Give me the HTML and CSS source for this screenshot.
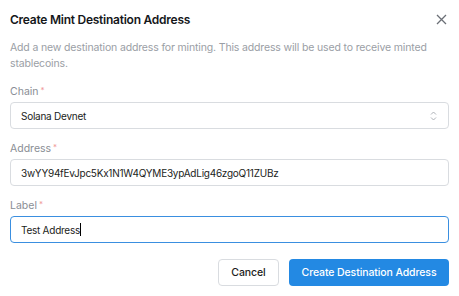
FILE: index.html
```html
<!doctype html>
<html lang="en">
<head>
<meta charset="utf-8">
<meta name="viewport" content="width=device-width, initial-scale=1">
<title>Create Mint Destination Address</title>
<link rel="stylesheet" href="styles.css">
</head>
<body>
	<div class="md-dialogo">
		<div class="md-topo">
			<h2 class="md-titulo">Create Mint Destination Address</h2>
			<button class="md-fechar" aria-label="Close">
				<svg width="11" height="11" viewBox="0 0 11 11"><path d="M1 1L10 10M10 1L1 10" stroke="#6b6f76" stroke-width="1.3" fill="none"/></svg>
			</button>
		</div>
		<p class="md-descricao">Add a new destination address for minting. This address will be used to receive minted stablecoins.</p>
		<form class="md-form">
			<div class="md-campo-grupo">
				<label class="md-rotulo">Chain<span class="md-obrigatorio">*</span></label>
				<div class="md-select">
					<span>Solana Devnet</span>
					<svg width="7" height="10" viewBox="0 0 7 10"><path d="M1 3.5L3.5 1L6 3.5M1 6.5L3.5 9L6 6.5" stroke="#a4a8ae" stroke-width="0.9" fill="none"/></svg>
				</div>
			</div>
			<div class="md-campo-grupo">
				<label class="md-rotulo">Address<span class="md-obrigatorio">*</span></label>
				<div class="md-campo">3wYY94fEvJpc5Kx1N1W4QYME3ypAdLig46zgoQ11ZUBz</div>
			</div>
			<div class="md-campo-grupo">
				<label class="md-rotulo">Label<span class="md-obrigatorio">*</span></label>
				<div class="md-campo md-foco">Test Address<span class="md-cursor"></span></div>
			</div>
			<div class="md-botoes">
				<button type="button" class="md-botao-cancelar">Cancel</button>
				<button type="button" class="md-botao-azul">Create Destination Address</button>
			</div>
		</form>
	</div>
</body>
</html>
```

FILE: styles.css
```css
*
{
	margin: 0;
	padding: 0;
	box-sizing: border-box;
}
body
{
	font-family: Inter, "Liberation Sans", Arial, sans-serif;
	font-size: 10.5px;
	background-color: #FFF;
	color: #1b1d21;
}
.md-dialogo
{
	padding: 11px 10px 10px 10px;
}
.md-topo
{
	display: flex;
	align-items: center;
	justify-content: space-between;
	height: 16px;
}
.md-titulo
{
	font-size: 12px;
	font-weight: 600;
	letter-spacing: -0.25px;
	color: #15171a;
}
.md-fechar
{
	border: none;
	background: none;
	display: flex;
	margin-right: 2px;
}
.md-descricao
{
	margin-top: 13px;
	color: #9a9ea5;
	line-height: 16px;
	letter-spacing: -0.15px;
	width: 420px;
}
.md-form
{
	margin-top: 12px;
}
.md-campo-grupo
{
	margin-bottom: 12px;
}
.md-rotulo
{
	display: block;
	color: #8a8e95;
	line-height: 16px;
	height: 16px;
	margin-bottom: 2px;
}
.md-obrigatorio
{
	color: #f09a9a;
	font-size: 8px;
	line-height: 8px;
	margin-left: 2px;
	vertical-align: 2px;
}
.md-select,
.md-campo
{
	display: flex;
	align-items: center;
	justify-content: space-between;
	height: 27px;
	border: 1px solid #d9dce0;
	border-radius: 4px;
	padding: 0 10px;
	font-size: 10px;
	letter-spacing: -0.25px;
	color: #1b1d21;
}
.md-select svg
{
	margin-right: 1px;
}
.md-campo
{
	justify-content: flex-start;
}
.md-foco
{
	border-color: #3a8fe0;
}
.md-cursor
{
	display: inline-block;
	width: 1px;
	height: 13px;
	background-color: #000;
}
.md-botoes
{
	display: flex;
	justify-content: flex-end;
	gap: 10px;
	margin-top: 16px;
}
.md-botao-cancelar
{
	height: 27px;
	width: 61px;
	background-color: #FFF;
	border: 1px solid #d9dce0;
	border-radius: 4px;
	font-family: inherit;
	font-size: 10.5px;
	letter-spacing: -0.1px;
	font-weight: 500;
	color: #1b1d21;
}
.md-botao-azul
{
	height: 27px;
	width: 160px;
	background-color: #2389e3;
	border: none;
	border-radius: 4px;
	font-family: inherit;
	font-size: 10.5px;
	letter-spacing: -0.1px;
	font-weight: 500;
	color: #FFF;
}
```
